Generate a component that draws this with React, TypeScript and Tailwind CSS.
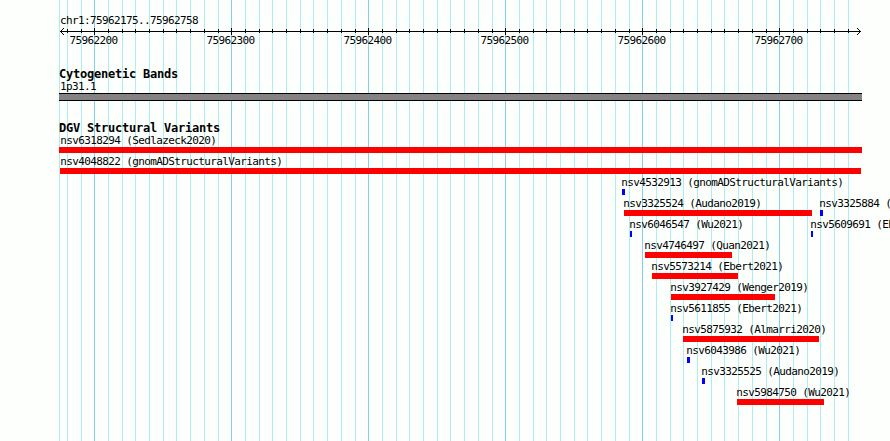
type Feature = {
  name: string;
  start: number;
  width: number;
  labelStart?: number;
};

const rows: Feature[][] = [
  [{ name: "nsv6318294 (Sedlazeck2020)", start: 59, width: 803, labelStart: 60.3 }],
  [{ name: "nsv4048822 (gnomADStructuralVariants)", start: 60, width: 801, labelStart: 60.3 }],
  [{ name: "nsv4532913 (gnomADStructuralVariants)", start: 622, width: 3 }],
  [
    { name: "nsv3325524 (Audano2019)", start: 624, width: 188 },
    { name: "nsv3325884 (Audano2019)", start: 820, width: 3 },
  ],
  [
    { name: "nsv6046547 (Wu2021)", start: 630, width: 2 },
    { name: "nsv5609691 (Ebert2021)", start: 811, width: 2 },
  ],
  [{ name: "nsv4746497 (Quan2021)", start: 645, width: 87 }],
  [{ name: "nsv5573214 (Ebert2021)", start: 652, width: 86 }],
  [{ name: "nsv3927429 (Wenger2019)", start: 671, width: 104 }],
  [{ name: "nsv5611855 (Ebert2021)", start: 671, width: 2 }],
  [{ name: "nsv5875932 (Almarri2020)", start: 683, width: 136 }],
  [{ name: "nsv6043986 (Wu2021)", start: 687, width: 3 }],
  [{ name: "nsv3325525 (Audano2019)", start: 702, width: 3 }],
  [{ name: "nsv5984750 (Wu2021)", start: 737, width: 87 }],
];

// One tick every 10 bp, a major one every 100 bp
const ticks = Array.from({ length: 58 }, (_, i) => {
  const step = i - 2;
  return { x: Math.floor(94.72 + step * 13.7), major: step % 10 === 0 };
});

const positions = [75962200, 75962300, 75962400, 75962500, 75962600, 75962700];

function GridLines() {
  return (
    <svg className="absolute inset-0" width="890" height="441" shapeRendering="crispEdges">
      <rect x="59" y="0" width="1" height="441" fill="#afeeee" />
      {ticks.map((tick) => (
        <rect
          key={tick.x}
          x={tick.x}
          y="0"
          width="1"
          height="441"
          fill={tick.major ? "#87ceeb" : "#afeeee"}
        />
      ))}
    </svg>
  );
}

function Ruler() {
  return (
    <svg className="block" width="890" height="9" shapeRendering="crispEdges">
      <rect x="60" y="4" width="801" height="1" />
      {ticks.map((tick) => (
        <rect
          key={tick.x}
          x={tick.x}
          y={tick.major ? 1 : 2}
          width="1"
          height={tick.major ? 7 : 4}
        />
      ))}
      {[1, 2, 3].map((d) => (
        <g key={d}>
          <rect x={60 + d} y={4 - d} width="1" height="1" />
          <rect x={60 + d} y={4 + d} width="1" height="1" />
          <rect x={860 - d} y={4 - d} width="1" height="1" />
          <rect x={860 - d} y={4 + d} width="1" height="1" />
        </g>
      ))}
    </svg>
  );
}

function TrackTitle({ children }: { children: string }) {
  return (
    <h2 className="ml-[59px] h-[13px] text-[12px] leading-[13px] font-bold tracking-[-0.224px]">
      {children}
    </h2>
  );
}

function FeatureItem({ feature }: { feature: Feature }) {
  const { name, start, width } = feature;
  const labelStart = feature.labelStart ?? start - 0.7;
  return (
    <div className="col-start-1 row-start-1 min-w-0">
      <p className="h-[13px] leading-[13px]" style={{ marginLeft: labelStart }}>
        {name}
      </p>
      <div
        className={`h-1.5 ${width > 3 ? "bg-[#ff0000]" : "bg-[#0000ff]"}`}
        style={{ marginLeft: start, width }}
      />
    </div>
  );
}

export default function App() {
  return (
    <main className="relative h-[441px] w-[890px] overflow-hidden bg-[#fdfffc] font-['DejaVu_Sans_Mono',monospace] text-[11px] tracking-[-0.622px] whitespace-pre text-black">
      <GridLines />
      <div className="relative flex flex-col">
        <p className="mt-[14px] ml-[60px] h-[13px] leading-[13px]">chr1:75962175..75962758</p>
        <Ruler />
        <div className="-mt-[2px] ml-[69.5px] flex h-[13px] gap-[89px]">
          {positions.map((position) => (
            <span key={position} className="w-12 leading-[13px]">
              {position}
            </span>
          ))}
        </div>

        <section className="mt-[21px]">
          <TrackTitle>Cytogenetic Bands</TrackTitle>
          <p className="-mt-px ml-[60px] h-[13px] leading-[13px]">1p31.1</p>
          <div className="ml-[59px] h-2 w-[803px] border-y border-black bg-[#848284]" />
        </section>

        <section className="mt-[21px]">
          <TrackTitle>DGV Structural Variants</TrackTitle>
          <div className="-mt-px flex flex-col gap-0.5">
            {rows.map((row) => (
              <div key={row[0].name} className="grid grid-cols-[890px]">
                {row.map((feature) => (
                  <FeatureItem key={feature.name} feature={feature} />
                ))}
              </div>
            ))}
          </div>
        </section>
      </div>
    </main>
  );
}
